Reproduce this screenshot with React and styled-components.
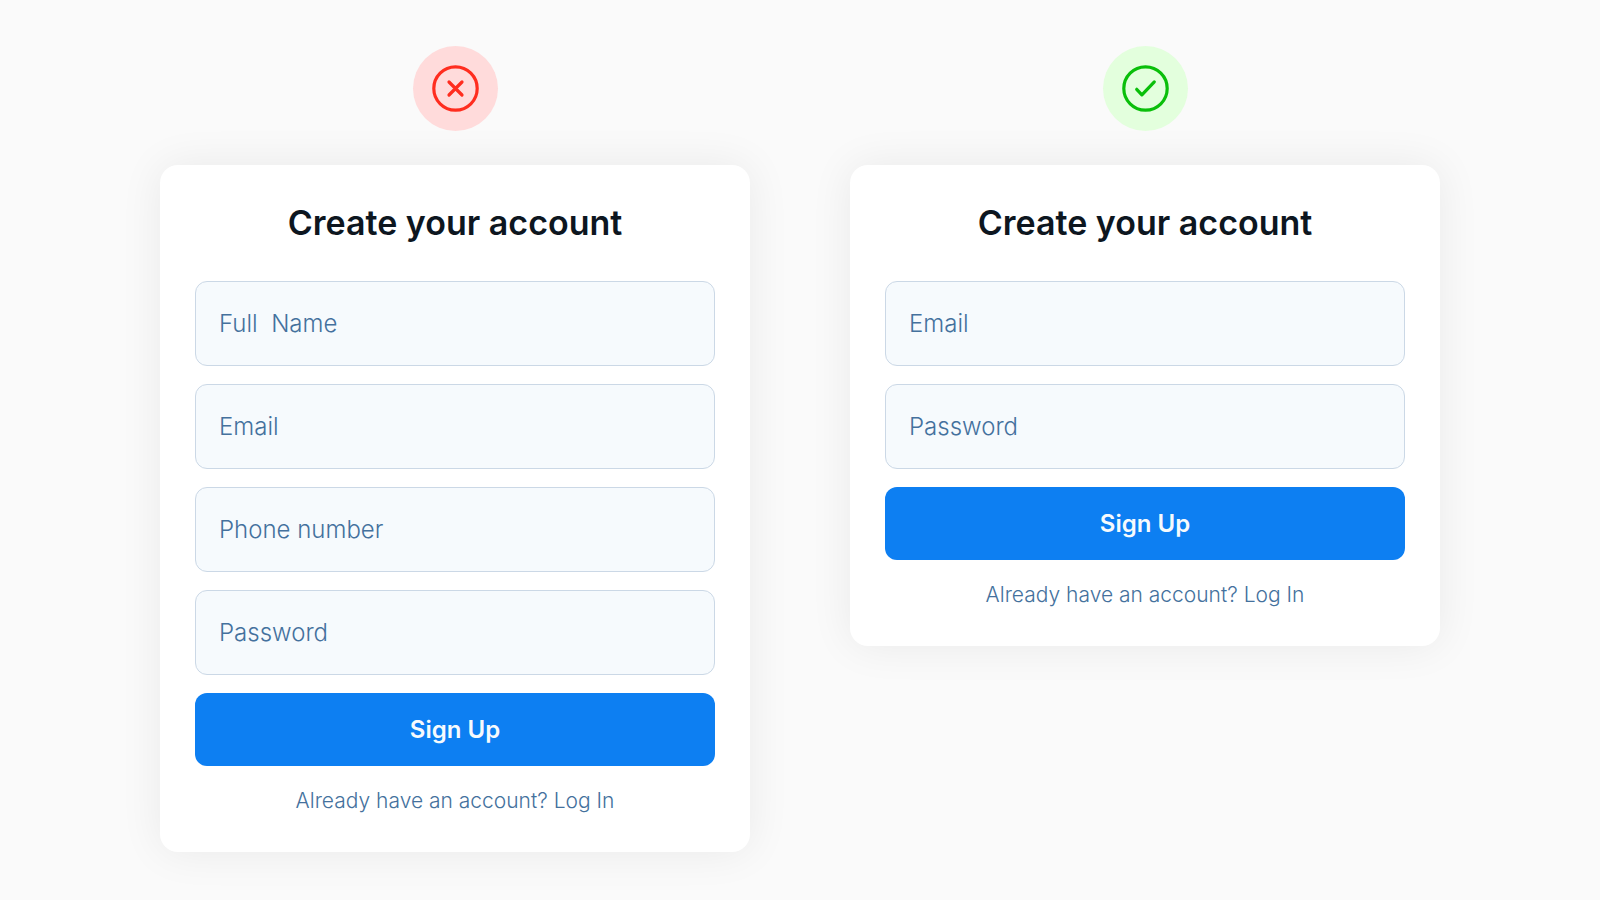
import { useState } from 'react';
import styled, { createGlobalStyle } from 'styled-components';

const GlobalStyle = createGlobalStyle`
  * {
    box-sizing: border-box;
  }

  body {
    margin: 0;
    background: #fafafa;
    font-family: Inter, "Liberation Sans", sans-serif;
  }
`;

const Page = styled.main`
  display: grid;
  grid-template-columns: repeat(auto-fit, minmax(420px, 1fr));
  align-items: start;
  gap: 48px 100px;
  padding: 46px 10% 48px;
`;

const Example = styled.section`
  display: flex;
  flex-direction: column;
  align-items: center;
  gap: 34px;
`;

const Badge = styled.div`
  display: flex;
  align-items: center;
  justify-content: center;
  width: 85px;
  height: 85px;
  border-radius: 50%;
  color: ${({ $valid }) => ($valid ? '#0abf0a' : '#ff2d1f')};
  background: ${({ $valid }) => ($valid ? '#e3ffdd' : '#ffdbdb')};
`;

const Card = styled.form`
  display: flex;
  flex-direction: column;
  gap: 18px;
  width: 100%;
  padding: 35px;
  background: #fff;
  border-radius: 18px;
  box-shadow: 0 0 44px rgb(0, 0, 0, .07);
`;

const Title = styled.h2`
  margin: 0 0 18px;
  color: #0d161f;
  font-size: 34px;
  font-weight: 600;
  line-height: 45px;
  text-align: center;
`;

const Input = styled.input`
  width: 100%;
  height: 85px;
  padding: 0 23px;
  border: 1px solid #cbd8e6;
  border-radius: 12px;
  background: #f6fafd;
  color: #44719d;
  font-family: inherit;
  font-size: 24px;
  font-weight: 300;

  &::placeholder {
    color: #44719d;
    opacity: 1;
    white-space: pre;
  }
`;

const SubmitButton = styled.button`
  height: 73px;
  border: 0;
  border-radius: 12px;
  background: #0d7ff2;
  color: #f6fafd;
  font-family: inherit;
  font-size: 24px;
  font-weight: 600;
  cursor: pointer;
`;

const Footer = styled.p`
  margin: 0;
  color: #44719d;
  font-size: 21px;
  font-weight: 300;
  line-height: 33px;
  text-align: center;
`;

const LoginLink = styled.a`
  color: inherit;
  text-decoration: none;
`;

const StatusIcon = ({ valid }) => (
  <svg
    width="47"
    height="47"
    viewBox="-23.5 -23.5 47 47"
    fill="none"
    stroke="currentColor"
    strokeWidth="3.2"
    strokeLinecap="round"
    strokeLinejoin="round"
    aria-hidden="true"
  >
    <circle r="21.7" />
    {valid
      ? <path d="M-8.8 .8L-3.6 6.4L8.8 -6.6" />
      : <path d="M-6.5 -6.5L6.5 6.5M6.5 -6.5L-6.5 6.5" />}
  </svg>
);

const SignUpForm = ({ fields }) => {
  const [values, setValues] = useState({});

  const handleChange = (e) => {
    setValues({ ...values, [e.target.name]: e.target.value });
  };

  return (
    <Card onSubmit={(e) => e.preventDefault()}>
      <Title>Create your account</Title>
      {
        fields.map(({ name, type, label }) => (
          <Input
            key={name}
            name={name}
            type={type}
            placeholder={label}
            aria-label={label}
            value={values[name] || ''}
            onChange={handleChange}
          />
        ))
      }
      <SubmitButton type="submit">Sign Up</SubmitButton>
      <Footer>
        Already have an account? <LoginLink href="#login">Log In</LoginLink>
      </Footer>
    </Card>
  );
};

const fullName = { name: 'fullName', type: 'text', label: 'Full  Name' };
const email = { name: 'email', type: 'email', label: 'Email' };
const phone = { name: 'phone', type: 'tel', label: 'Phone number' };
const password = { name: 'password', type: 'password', label: 'Password' };

const examples = [
  { id: 'long', valid: false, fields: [fullName, email, phone, password] },
  { id: 'short', valid: true, fields: [email, password] },
];

const App = () => (
  <>
    <GlobalStyle />
    <Page>
      {
        examples.map(({ id, valid, fields }) => (
          <Example key={id}>
            <Badge $valid={valid}>
              <StatusIcon valid={valid} />
            </Badge>
            <SignUpForm fields={fields} />
          </Example>
        ))
      }
    </Page>
  </>
);

export default App;
